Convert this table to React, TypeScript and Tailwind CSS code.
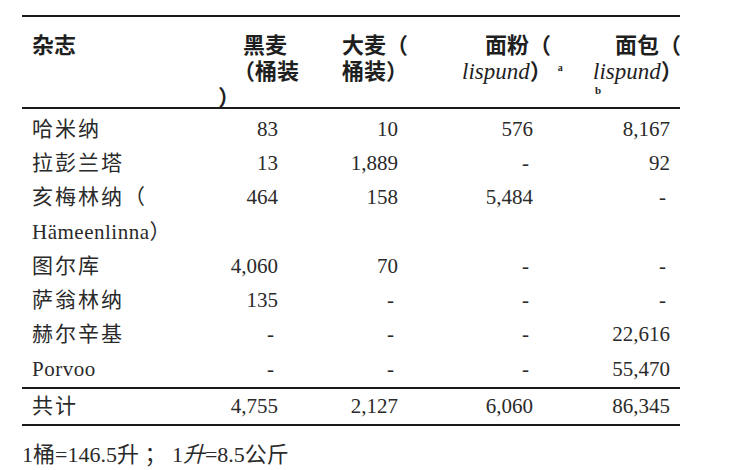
const rows: [string, string, string, string, string][] = [
  ['哈米纳', '83', '10', '576', '8,167'],
  ['拉彭兰塔', '13', '1,889', '-', '92'],
  ['亥梅林纳（', '464', '158', '5,484', '-'],
  ['Hämeenlinna）', '', '', '', ''],
  ['图尔库', '4,060', '70', '-', '-'],
  ['萨翁林纳', '135', '-', '-', '-'],
  ['赫尔辛基', '-', '-', '-', '22,616'],
  ['Porvoo', '-', '-', '-', '55,470'],
]

const grid = 'grid grid-cols-[136px_120px_120px_135px_137px]'
const serif = "font-['Liberation_Serif','Noto_Sans_CJK_SC',serif]"
const sansBold = "font-['Noto_Sans_CJK_SC',sans-serif] font-bold"

function isLatin(s: string) {
  return /^[A-Za-zä]/.test(s)
}

function Row({ cells }: { cells: string[] }) {
  return (
    <div className={`${grid} h-[34.3px] items-center text-[21px] leading-none text-[#2a2a2a]`}>
      <div className={`whitespace-nowrap pl-[10px] ${isLatin(cells[0]) ? 'tracking-[0.5px]' : 'tracking-[2px]'}`}>
        {cells[0]}
      </div>
      {cells.slice(1).map((c, i) => (
        <div key={i} className={`text-right whitespace-nowrap ${c === '-' ? 'pr-[4px]' : ''}`}>
          {c}
        </div>
      ))}
    </div>
  )
}

export default function App() {
  return (
    <div className={`w-[740px] h-[470px] bg-white ${serif} pt-[15px]`}>
      <div className="ml-[22px] w-[658px]">
        {/* header */}
        <div className="border-t-2 border-b-2 border-[#1a1a1a] h-[94px] pt-[13px]">
          <div className={`${grid} text-[22px] leading-[26px] text-[#1f1f1f]`}>
            <div className={`${sansBold} pl-[10px]`}>杂志</div>
            <div className={sansBold}>
              <div className="ml-[85px] whitespace-nowrap">黑麦</div>
              <div className="ml-[75px] whitespace-nowrap">（桶装</div>
              <div className="ml-[60px] whitespace-nowrap">）</div>
            </div>
            <div className={sansBold}>
              <div className="ml-[64px] whitespace-nowrap">大麦（</div>
              <div className="ml-[64px] whitespace-nowrap">桶装）</div>
            </div>
            <div>
              <div className={`${sansBold} ml-[87px] whitespace-nowrap`}>面粉（</div>
              <div className="ml-[64px] whitespace-nowrap">
                <span className="italic text-[23px]">lispund</span>
                <span className={sansBold}>）</span>
                <span className="relative -top-[8px] ml-[6px] text-[10px] font-bold">a</span>
              </div>
            </div>
            <div>
              <div className={`${sansBold} ml-[82px] whitespace-nowrap`}>面包（</div>
              <div className="ml-[60px] whitespace-nowrap">
                <span className="italic text-[23px]">lispund</span>
                <span className={sansBold}>）</span>
              </div>
              <div className="ml-[62px] text-[11px] leading-[10px] font-bold">b</div>
            </div>
          </div>
        </div>
        {/* body */}
        <div className="pt-[3px] pb-[1px]">
          {rows.map((r, i) => (
            <Row key={i} cells={r} />
          ))}
        </div>
        <div className="border-t-2 border-b-2 border-[#1a1a1a]">
          <Row cells={['共计', '4,755', '2,127', '6,060', '86,345']} />
        </div>
        <div className="mt-[18px] text-[22px] leading-none text-[#2a2a2a] whitespace-nowrap">
          1桶=146.5升 ； 1<span className="italic">升</span>=8.5公斤
        </div>
      </div>
    </div>
  )
}
